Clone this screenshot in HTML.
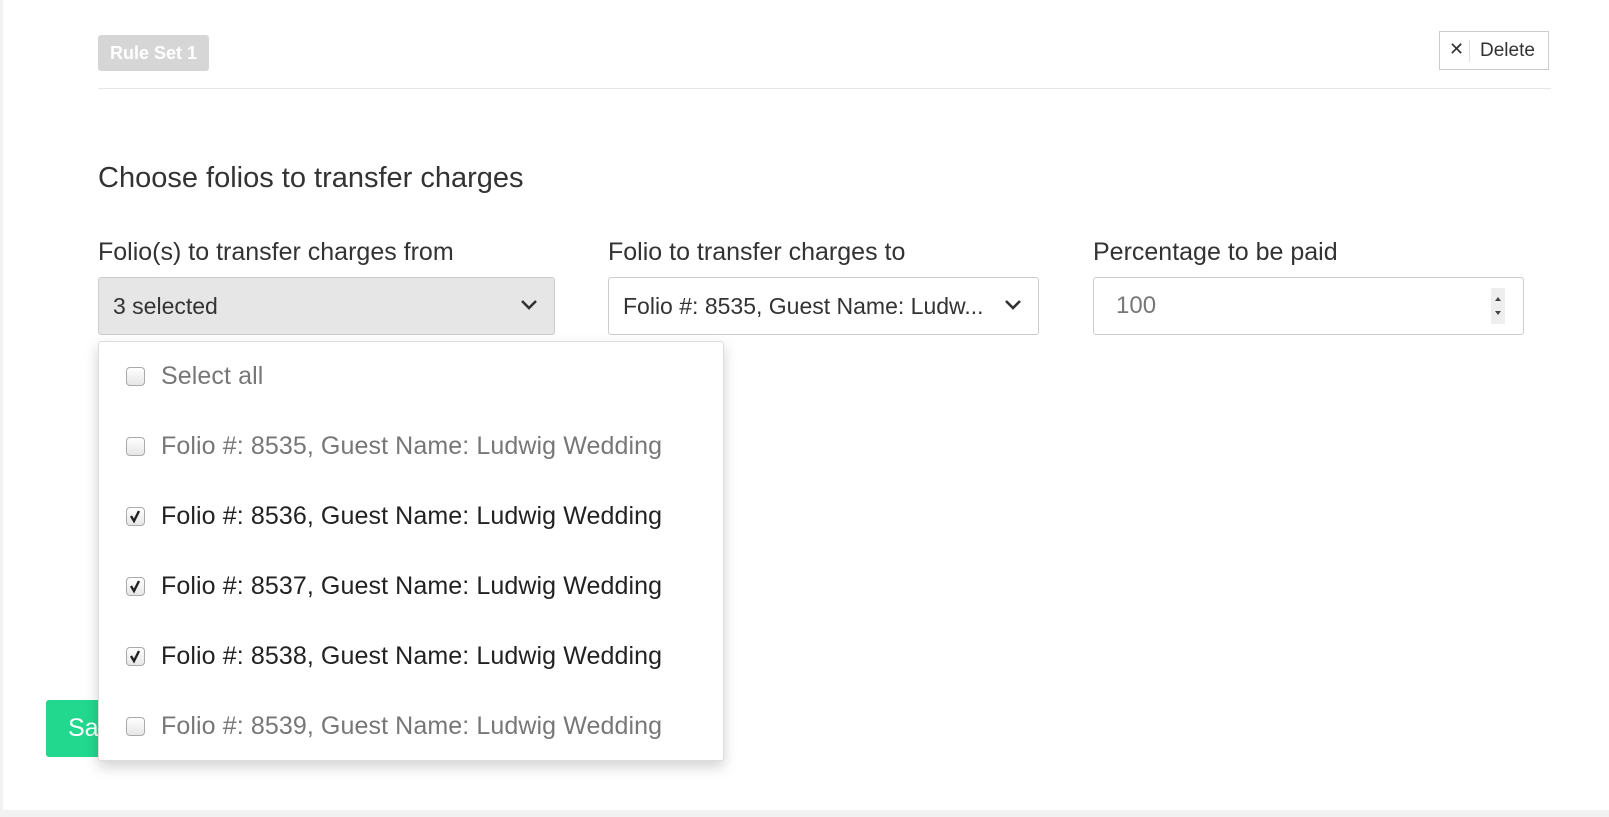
<!DOCTYPE html>
<html><head><meta charset="utf-8"><style>
*{box-sizing:border-box;margin:0;padding:0}
body{width:1609px;height:817px;background:#f2f2f2;font-family:"Liberation Sans",sans-serif;color:#333;position:relative;overflow:hidden}
.page{position:absolute;left:3px;top:0;width:1606px;height:810px;background:#fff}
.abs{position:absolute}
.badge{left:98px;top:35px;width:111px;height:36px;background:#d6d6d6;border-radius:3px;color:#fff;font-weight:bold;font-size:18px;line-height:36px;text-align:center}
.hr{left:98px;top:88px;width:1453px;height:1px;background:#e6e6e6}
.del{left:1439px;top:31px;width:110px;height:39px;border:1px solid #ccc;font-size:19px;line-height:37px}
.h{left:98px;top:162px;font-size:29px;color:#333}
.lbl{top:238px;font-size:25px;color:#333}
.sel{top:277px;height:58px;border:1px solid #ccc;border-radius:3px;font-size:23px;line-height:56px;padding-left:14px;color:#333}
.chev{position:absolute;right:16px;top:20px}
.dd{left:98px;top:341px;width:626px;height:420px;background:#fff;border:1px solid #ddd;border-radius:3px;box-shadow:0 6px 14px rgba(0,0,0,.18)}
.item{position:absolute;left:0;height:40px;font-size:25px;line-height:40px;white-space:nowrap;letter-spacing:.1px}
.cb{position:absolute;left:27px;top:11px;width:19px;height:19px;border:1px solid #aaa;border-radius:4px;background:linear-gradient(#fff,#e6e6e6)}
.item span{position:absolute;left:62px}
.g{color:#777}.d{color:#222}
.save{left:46px;top:700px;width:70px;height:57px;background:#22d88f;color:#fff;font-size:25px;line-height:57px;padding-left:22px;border-radius:3px 0 0 3px}
</style></head><body>
<div class="page"></div>
<div class="abs badge">Rule Set 1</div>
<div class="abs hr"></div>
<div class="abs del"><span style="position:absolute;left:9px;top:-1px;font-size:18px">✕</span><span style="position:absolute;left:29px;top:8px;width:1px;height:22px;background:#ddd"></span><span style="position:absolute;left:40px">Delete</span></div>
<div class="abs h">Choose folios to transfer charges</div>
<div class="abs lbl" style="left:98px">Folio(s) to transfer charges from</div>
<div class="abs lbl" style="left:608px">Folio to transfer charges to</div>
<div class="abs lbl" style="left:1093px">Percentage to be paid</div>
<div class="abs sel" style="left:98px;width:457px;background:#e6e6e6">3 selected<svg class="chev" width="18" height="14" viewBox="0 0 18 14"><path d="M2 3l7 7 7-7" fill="none" stroke="#333" stroke-width="2.6"/></svg></div>
<div class="abs sel" style="left:608px;width:431px;background:#fff">Folio #: 8535, Guest Name: Ludw...<svg class="chev" width="18" height="14" viewBox="0 0 18 14"><path d="M2 3l7 7 7-7" fill="none" stroke="#333" stroke-width="2.6"/></svg></div>
<div class="abs sel" style="left:1093px;width:431px;background:#fff;color:#777;padding-left:22px;font-size:24px">100<div style="position:absolute;right:18px;top:10px;width:14px;height:36px;background:#eee"><svg width="14" height="36"><path d="M4 13l3-4 3 4zM4 23l3 4 3-4z" fill="#444"/></svg></div></div>
<div class="abs save">Sa</div>
<div class="abs dd">
<div class="item g" style="top:14px"><div class="cb"></div><span>Select all</span></div>
<div class="item g" style="top:84px"><div class="cb"></div><span>Folio #: 8535, Guest Name: Ludwig Wedding</span></div>
<div class="item d" style="top:154px"><div class="cb"><svg width="17" height="17" style="position:absolute;left:0;top:0"><path d="M4 8l3 5 5-10" fill="none" stroke="#222" stroke-width="2.4"/></svg></div><span>Folio #: 8536, Guest Name: Ludwig Wedding</span></div>
<div class="item d" style="top:224px"><div class="cb"><svg width="17" height="17" style="position:absolute;left:0;top:0"><path d="M4 8l3 5 5-10" fill="none" stroke="#222" stroke-width="2.4"/></svg></div><span>Folio #: 8537, Guest Name: Ludwig Wedding</span></div>
<div class="item d" style="top:294px"><div class="cb"><svg width="17" height="17" style="position:absolute;left:0;top:0"><path d="M4 8l3 5 5-10" fill="none" stroke="#222" stroke-width="2.4"/></svg></div><span>Folio #: 8538, Guest Name: Ludwig Wedding</span></div>
<div class="item g" style="top:364px"><div class="cb"></div><span>Folio #: 8539, Guest Name: Ludwig Wedding</span></div>
</div>
</body></html>
